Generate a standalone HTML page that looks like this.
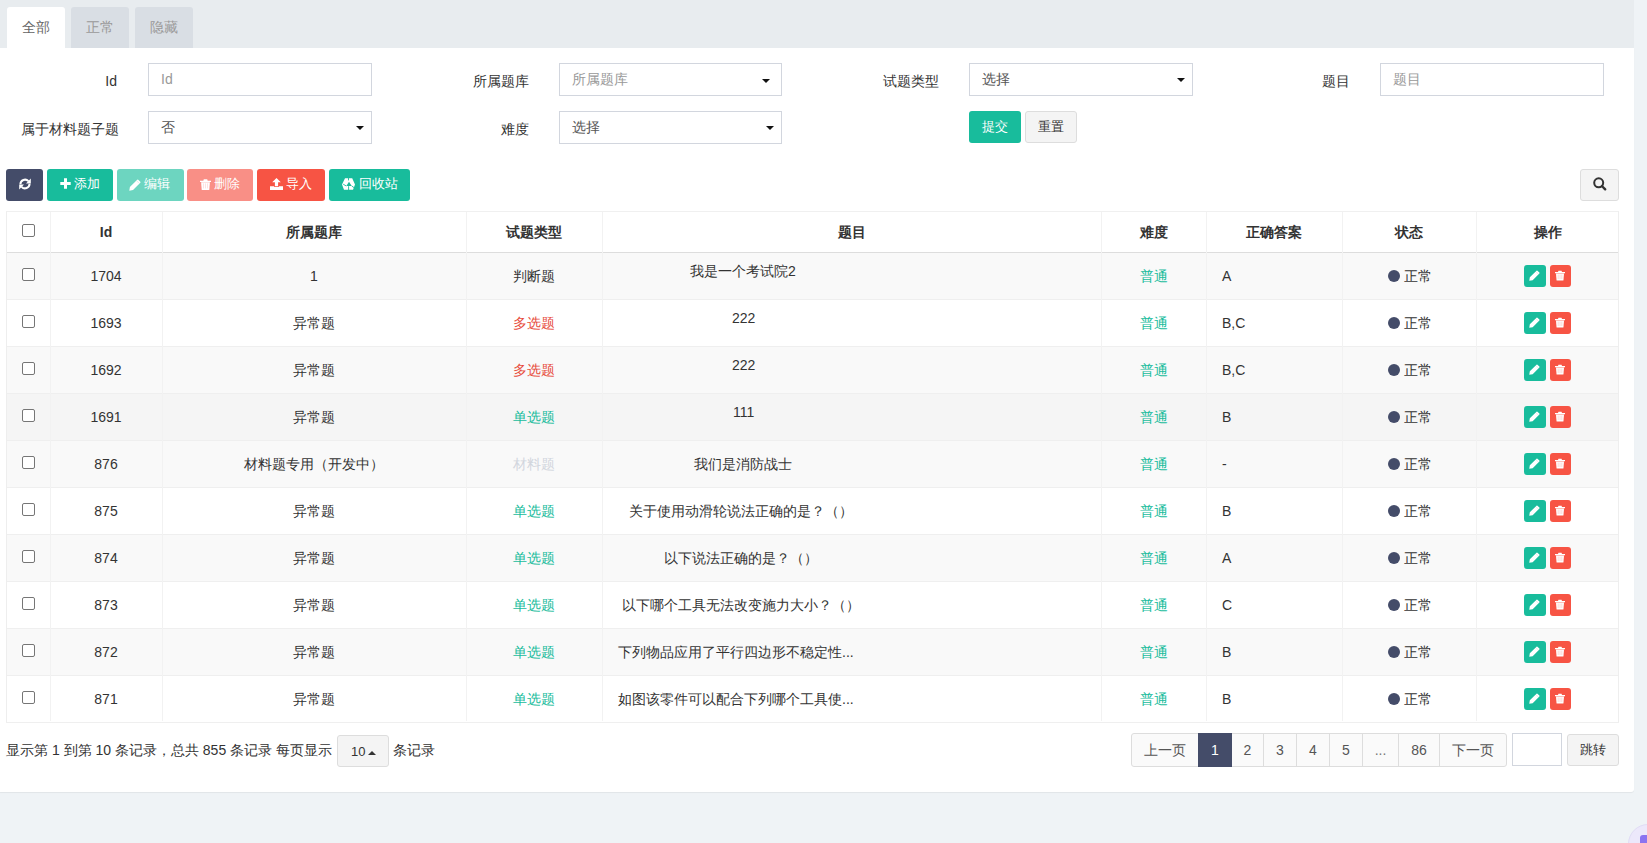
<!DOCTYPE html>
<html><head><meta charset="utf-8"><style>
*{box-sizing:border-box;margin:0;padding:0}
html,body{width:1647px;height:843px;overflow:hidden;background:#eff3f6;font-family:"Liberation Sans",sans-serif;font-size:14px;color:#333}
.a{position:absolute}
svg{display:block}
#topbar{left:0;top:0;width:1634px;height:48px;background:#e8ecef}
.tab{top:7px;height:41px;width:58px;border-radius:3px 3px 0 0;background:#d9dee4;color:#999;text-align:center;line-height:40px}
.tab.on{background:#fff;color:#666}
#panel{left:0;top:48px;width:1634px;height:744px;background:#fff;border-radius:0 0 3px 0;box-shadow:0 1px 1px rgba(0,0,0,0.06)}
.lbl{height:20px;line-height:20px;text-align:right;white-space:nowrap;color:#333}
.inp{height:33px;border:1px solid #d2d6de;background:#fff;color:#999;padding-left:12px;line-height:31px;white-space:nowrap}
.inp.sel{color:#555}
.caret{position:absolute;right:7px;top:14px;width:0;height:0;border-left:4px solid transparent;border-right:4px solid transparent;border-top:4px solid #111}
.btn{border-radius:3px;color:#fff;white-space:nowrap;height:32px}
.btn svg{position:absolute}
.btn span{position:absolute;top:-1px;line-height:32px;font-size:13px}
.tw{left:6px;top:211px;width:1613px;height:511px;border:1px solid #eee;border-top-color:#f0f0f0}
.th{top:212px;height:40px;line-height:40px;text-align:center;font-weight:bold;color:#333}
.vl{width:1px;background:#f2f2f2}
.hl{height:1px;background:#efefef}
.td{height:47px;line-height:47px;text-align:center;white-space:nowrap}
.cb{width:13px;height:13px;border:1px solid #767676;border-radius:2px;background:#fff}
.ob{width:22px;height:22px;border-radius:3px}
.ob svg{position:absolute}
.dot{width:12px;height:12px;border-radius:50%;background:#444c69}
.pg{top:733px;height:34px;border:1px solid #ddd;background:#fafafa;color:#555;text-align:center;line-height:32px}
</style></head><body>
<div id="topbar" class="a"></div>
<div class="a tab on" style="left:7px">全部</div>
<div class="a tab" style="left:71px">正常</div>
<div class="a tab" style="left:135px">隐藏</div>
<div id="panel" class="a"></div>
<div class="a lbl" style="right:1530px;top:71px">Id</div>
<div class="a inp" style="left:148px;top:63px;width:224px">Id</div>
<div class="a lbl" style="right:1118px;top:71px">所属题库</div>
<div class="a inp" style="left:559px;top:63px;width:223px">所属题库<i class="caret" style="right:11px;top:15px"></i></div>
<div class="a lbl" style="right:708px;top:71px">试题类型</div>
<div class="a inp sel" style="left:969px;top:63px;width:224px">选择<i class="caret"></i></div>
<div class="a lbl" style="right:297px;top:71px">题目</div>
<div class="a inp" style="left:1380px;top:63px;width:224px">题目</div>
<div class="a lbl" style="right:1528px;top:119px">属于材料题子题</div>
<div class="a inp sel" style="left:148px;top:111px;width:224px">否<i class="caret"></i></div>
<div class="a lbl" style="right:1118px;top:119px">难度</div>
<div class="a inp sel" style="left:559px;top:111px;width:223px">选择<i class="caret"></i></div>
<div class="a btn" style="left:969px;top:111px;width:52px;background:#18bc9c;text-align:center;line-height:31px;font-size:13px">提交</div>
<div class="a btn" style="left:1025px;top:111px;width:52px;background:#f4f4f4;border:1px solid #ddd;color:#333;text-align:center;line-height:29px;font-size:13px">重置</div>
<div class="a btn" style="left:6px;top:169px;width:37px;background:#444c69"><div class="a" style="left:13px;top:9px"><svg width="12" height="12" viewBox="0 0 12 12"><path d="M1.4 6.2A4.6 4.6 0 0 1 9.4 3.2" fill="none" stroke="#fff" stroke-width="2"/><path d="M11.8 0.6V5.4H7Z" fill="#fff"/><path d="M10.6 5.8A4.6 4.6 0 0 1 2.6 8.8" fill="none" stroke="#fff" stroke-width="2"/><path d="M0.2 11.4V6.6H5Z" fill="#fff"/></svg></div></div>
<div class="a btn" style="left:47px;top:169px;width:66px;background:#18bc9c"><div class="a" style="left:13px;top:9px"><svg width="11" height="11" viewBox="0 0 11 11"><path d="M4 0.3h3v3.7h3.7v3H7v3.7H4V7H0.3V4H4Z" fill="#fff"/></svg></div><span style="left:27px">添加</span></div>
<div class="a btn" style="left:117px;top:169px;width:67px;background:#6dd5c0"><div class="a" style="left:12px;top:10px"><svg width="12" height="12" viewBox="0 0 12 12"><path d="M0.3 11.7L0.9 8.0L8.2 0.7Q8.7 0.2 9.2 0.7L11.3 2.8Q11.8 3.3 11.3 3.8L4.0 11.1Z" fill="#fff"/><path d="M7.6 1.8L10.2 4.4" stroke="rgba(0,0,0,0.12)" stroke-width="0.8"/></svg></div><span style="left:27px">编辑</span></div>
<div class="a btn" style="left:187px;top:169px;width:66px;background:#f98f86"><div class="a" style="left:13px;top:10px"><svg width="11" height="11" viewBox="0 0 11 11"><path d="M3.8 0.3h3.4l0.5 1.4H11V3H0V1.7h3.3Z" fill="#fff"/><path d="M1.1 3.3h8.8l-0.6 7.4Q9.2 11 8.8 11H2.2Q1.8 11 1.7 10.7Z" fill="#fff"/><path d="M3.5 4.4v5M5.5 4.4v5M7.5 4.4v5" stroke="#f98f86" stroke-width="0.8" opacity="0.3"/></svg></div><span style="left:27px">删除</span></div>
<div class="a btn" style="left:257px;top:169px;width:68px;background:#f75444"><div class="a" style="left:13px;top:9px"><svg width="13" height="12" viewBox="0 0 13 12"><path d="M6.5 0L10.8 4.3H8.1V8.2H4.9V4.3H2.2Z" fill="#fff"/><path d="M0 8.2h4.2v0.9h4.6V8.2H13V12H0Z" fill="#fff"/></svg></div><span style="left:29px">导入</span></div>
<div class="a btn" style="left:329px;top:169px;width:81px;background:#18bc9c"><div class="a" style="left:13px;top:9px"><svg width="13" height="12" viewBox="0 0 13 12"><path fill-rule="evenodd" d="M3 0.3H10.2L13 6.5L11 11.7H2L0 6.5ZM4.3 8H9.7L7 3.8Z" fill="#fff"/><path d="M6.5 0V2.4M4.3 8L1.2 6.2M9.7 8L12 9.6M6.6 8.2V12" stroke="#18bc9c" stroke-width="0.9"/></svg></div><span style="left:30px">回收站</span></div>
<div class="a btn" style="left:1580px;top:169px;width:39px;background:#f4f4f4;border:1px solid #ddd"><div class="a" style="left:12px;top:7px"><svg width="14" height="14" viewBox="0 0 14 14"><circle cx="5.7" cy="5.8" r="4.5" fill="none" stroke="#333" stroke-width="2"/><path d="M8.9 9L12.2 12.3" stroke="#333" stroke-width="2.4" stroke-linecap="round"/></svg></div></div>
<div class="a tw"></div>
<div class="a" style="left:7px;top:252px;width:1611px;height:47px;background:#f9f9f9"></div>
<div class="a" style="left:7px;top:299px;width:1611px;height:47px;background:#fff"></div>
<div class="a hl" style="left:7px;top:299px;width:1611px"></div>
<div class="a" style="left:7px;top:346px;width:1611px;height:47px;background:#f9f9f9"></div>
<div class="a hl" style="left:7px;top:346px;width:1611px"></div>
<div class="a" style="left:7px;top:393px;width:1611px;height:47px;background:#f5f5f5"></div>
<div class="a hl" style="left:7px;top:393px;width:1611px"></div>
<div class="a" style="left:7px;top:440px;width:1611px;height:47px;background:#f9f9f9"></div>
<div class="a hl" style="left:7px;top:440px;width:1611px"></div>
<div class="a" style="left:7px;top:487px;width:1611px;height:47px;background:#fff"></div>
<div class="a hl" style="left:7px;top:487px;width:1611px"></div>
<div class="a" style="left:7px;top:534px;width:1611px;height:47px;background:#f9f9f9"></div>
<div class="a hl" style="left:7px;top:534px;width:1611px"></div>
<div class="a" style="left:7px;top:581px;width:1611px;height:47px;background:#fff"></div>
<div class="a hl" style="left:7px;top:581px;width:1611px"></div>
<div class="a" style="left:7px;top:628px;width:1611px;height:47px;background:#f9f9f9"></div>
<div class="a hl" style="left:7px;top:628px;width:1611px"></div>
<div class="a" style="left:7px;top:675px;width:1611px;height:47px;background:#fff"></div>
<div class="a hl" style="left:7px;top:675px;width:1611px"></div>
<div class="a" style="left:7px;top:252px;width:1611px;height:1px;background:#ddd"></div>
<div class="a hl" style="left:6px;top:722px;width:1613px"></div>
<div class="a vl" style="left:50px;top:212px;height:509px"></div>
<div class="a vl" style="left:162px;top:212px;height:509px"></div>
<div class="a vl" style="left:466px;top:212px;height:509px"></div>
<div class="a vl" style="left:602px;top:212px;height:509px"></div>
<div class="a vl" style="left:1101px;top:212px;height:509px"></div>
<div class="a vl" style="left:1206px;top:212px;height:509px"></div>
<div class="a vl" style="left:1342px;top:212px;height:509px"></div>
<div class="a vl" style="left:1476px;top:212px;height:509px"></div>
<div class="a cb" style="left:22px;top:224px"></div>
<div class="a th" style="left:50px;width:112px">Id</div>
<div class="a th" style="left:162px;width:304px">所属题库</div>
<div class="a th" style="left:466px;width:136px">试题类型</div>
<div class="a th" style="left:602px;width:499px">题目</div>
<div class="a th" style="left:1101px;width:105px">难度</div>
<div class="a th" style="left:1206px;width:136px">正确答案</div>
<div class="a th" style="left:1342px;width:134px">状态</div>
<div class="a th" style="left:1476px;width:143px">操作</div>
<div class="a cb" style="left:22px;top:268px"></div>
<div class="a td" style="left:50px;top:253px;width:112px">1704</div>
<div class="a td" style="left:162px;top:253px;width:304px">1</div>
<div class="a td" style="left:466px;top:253px;width:136px;color:#333">判断题</div>
<div class="a td" style="left:690px;top:248px;text-align:left">我是一个考试院2</div>
<div class="a td" style="left:1101px;top:253px;width:105px;color:#18bc9c">普通</div>
<div class="a td" style="left:1222px;top:253px;text-align:left">A</div>
<div class="a dot" style="left:1388px;top:270px"></div>
<div class="a td" style="left:1404px;top:253px;text-align:left">正常</div>
<div class="a ob" style="left:1524px;top:265px;background:#18bc9c"><div class="a" style="left:5px;top:5px"><svg width="11" height="11" viewBox="0 0 12 12"><path d="M0.3 11.7L0.9 8.0L8.2 0.7Q8.7 0.2 9.2 0.7L11.3 2.8Q11.8 3.3 11.3 3.8L4.0 11.1Z" fill="#fff"/><path d="M7.6 1.8L10.2 4.4" stroke="rgba(0,0,0,0.12)" stroke-width="0.8"/></svg></div></div>
<div class="a ob" style="left:1550px;top:265px;width:21px;background:#f75444"><div class="a" style="left:5px;top:5px"><svg width="10" height="11" viewBox="0 0 11 11"><path d="M3.8 0.3h3.4l0.5 1.4H11V3H0V1.7h3.3Z" fill="#fff"/><path d="M1.1 3.3h8.8l-0.6 7.4Q9.2 11 8.8 11H2.2Q1.8 11 1.7 10.7Z" fill="#fff"/><path d="M3.5 4.4v5M5.5 4.4v5M7.5 4.4v5" stroke="#f75444" stroke-width="0.8" opacity="0.3"/></svg></div></div>
<div class="a cb" style="left:22px;top:315px"></div>
<div class="a td" style="left:50px;top:300px;width:112px">1693</div>
<div class="a td" style="left:162px;top:300px;width:304px">异常题</div>
<div class="a td" style="left:466px;top:300px;width:136px;color:#e74c3c">多选题</div>
<div class="a td" style="left:732px;top:295px;text-align:left">222</div>
<div class="a td" style="left:1101px;top:300px;width:105px;color:#18bc9c">普通</div>
<div class="a td" style="left:1222px;top:300px;text-align:left">B,C</div>
<div class="a dot" style="left:1388px;top:317px"></div>
<div class="a td" style="left:1404px;top:300px;text-align:left">正常</div>
<div class="a ob" style="left:1524px;top:312px;background:#18bc9c"><div class="a" style="left:5px;top:5px"><svg width="11" height="11" viewBox="0 0 12 12"><path d="M0.3 11.7L0.9 8.0L8.2 0.7Q8.7 0.2 9.2 0.7L11.3 2.8Q11.8 3.3 11.3 3.8L4.0 11.1Z" fill="#fff"/><path d="M7.6 1.8L10.2 4.4" stroke="rgba(0,0,0,0.12)" stroke-width="0.8"/></svg></div></div>
<div class="a ob" style="left:1550px;top:312px;width:21px;background:#f75444"><div class="a" style="left:5px;top:5px"><svg width="10" height="11" viewBox="0 0 11 11"><path d="M3.8 0.3h3.4l0.5 1.4H11V3H0V1.7h3.3Z" fill="#fff"/><path d="M1.1 3.3h8.8l-0.6 7.4Q9.2 11 8.8 11H2.2Q1.8 11 1.7 10.7Z" fill="#fff"/><path d="M3.5 4.4v5M5.5 4.4v5M7.5 4.4v5" stroke="#f75444" stroke-width="0.8" opacity="0.3"/></svg></div></div>
<div class="a cb" style="left:22px;top:362px"></div>
<div class="a td" style="left:50px;top:347px;width:112px">1692</div>
<div class="a td" style="left:162px;top:347px;width:304px">异常题</div>
<div class="a td" style="left:466px;top:347px;width:136px;color:#e74c3c">多选题</div>
<div class="a td" style="left:732px;top:342px;text-align:left">222</div>
<div class="a td" style="left:1101px;top:347px;width:105px;color:#18bc9c">普通</div>
<div class="a td" style="left:1222px;top:347px;text-align:left">B,C</div>
<div class="a dot" style="left:1388px;top:364px"></div>
<div class="a td" style="left:1404px;top:347px;text-align:left">正常</div>
<div class="a ob" style="left:1524px;top:359px;background:#18bc9c"><div class="a" style="left:5px;top:5px"><svg width="11" height="11" viewBox="0 0 12 12"><path d="M0.3 11.7L0.9 8.0L8.2 0.7Q8.7 0.2 9.2 0.7L11.3 2.8Q11.8 3.3 11.3 3.8L4.0 11.1Z" fill="#fff"/><path d="M7.6 1.8L10.2 4.4" stroke="rgba(0,0,0,0.12)" stroke-width="0.8"/></svg></div></div>
<div class="a ob" style="left:1550px;top:359px;width:21px;background:#f75444"><div class="a" style="left:5px;top:5px"><svg width="10" height="11" viewBox="0 0 11 11"><path d="M3.8 0.3h3.4l0.5 1.4H11V3H0V1.7h3.3Z" fill="#fff"/><path d="M1.1 3.3h8.8l-0.6 7.4Q9.2 11 8.8 11H2.2Q1.8 11 1.7 10.7Z" fill="#fff"/><path d="M3.5 4.4v5M5.5 4.4v5M7.5 4.4v5" stroke="#f75444" stroke-width="0.8" opacity="0.3"/></svg></div></div>
<div class="a cb" style="left:22px;top:409px"></div>
<div class="a td" style="left:50px;top:394px;width:112px">1691</div>
<div class="a td" style="left:162px;top:394px;width:304px">异常题</div>
<div class="a td" style="left:466px;top:394px;width:136px;color:#18bc9c">单选题</div>
<div class="a td" style="left:733px;top:389px;text-align:left">111</div>
<div class="a td" style="left:1101px;top:394px;width:105px;color:#18bc9c">普通</div>
<div class="a td" style="left:1222px;top:394px;text-align:left">B</div>
<div class="a dot" style="left:1388px;top:411px"></div>
<div class="a td" style="left:1404px;top:394px;text-align:left">正常</div>
<div class="a ob" style="left:1524px;top:406px;background:#18bc9c"><div class="a" style="left:5px;top:5px"><svg width="11" height="11" viewBox="0 0 12 12"><path d="M0.3 11.7L0.9 8.0L8.2 0.7Q8.7 0.2 9.2 0.7L11.3 2.8Q11.8 3.3 11.3 3.8L4.0 11.1Z" fill="#fff"/><path d="M7.6 1.8L10.2 4.4" stroke="rgba(0,0,0,0.12)" stroke-width="0.8"/></svg></div></div>
<div class="a ob" style="left:1550px;top:406px;width:21px;background:#f75444"><div class="a" style="left:5px;top:5px"><svg width="10" height="11" viewBox="0 0 11 11"><path d="M3.8 0.3h3.4l0.5 1.4H11V3H0V1.7h3.3Z" fill="#fff"/><path d="M1.1 3.3h8.8l-0.6 7.4Q9.2 11 8.8 11H2.2Q1.8 11 1.7 10.7Z" fill="#fff"/><path d="M3.5 4.4v5M5.5 4.4v5M7.5 4.4v5" stroke="#f75444" stroke-width="0.8" opacity="0.3"/></svg></div></div>
<div class="a cb" style="left:22px;top:456px"></div>
<div class="a td" style="left:50px;top:441px;width:112px">876</div>
<div class="a td" style="left:162px;top:441px;width:304px">材料题专用（开发中）</div>
<div class="a td" style="left:466px;top:441px;width:136px;color:#d2d6de">材料题</div>
<div class="a td" style="left:694px;top:441px;text-align:left">我们是消防战士</div>
<div class="a td" style="left:1101px;top:441px;width:105px;color:#18bc9c">普通</div>
<div class="a td" style="left:1222px;top:441px;text-align:left">-</div>
<div class="a dot" style="left:1388px;top:458px"></div>
<div class="a td" style="left:1404px;top:441px;text-align:left">正常</div>
<div class="a ob" style="left:1524px;top:453px;background:#18bc9c"><div class="a" style="left:5px;top:5px"><svg width="11" height="11" viewBox="0 0 12 12"><path d="M0.3 11.7L0.9 8.0L8.2 0.7Q8.7 0.2 9.2 0.7L11.3 2.8Q11.8 3.3 11.3 3.8L4.0 11.1Z" fill="#fff"/><path d="M7.6 1.8L10.2 4.4" stroke="rgba(0,0,0,0.12)" stroke-width="0.8"/></svg></div></div>
<div class="a ob" style="left:1550px;top:453px;width:21px;background:#f75444"><div class="a" style="left:5px;top:5px"><svg width="10" height="11" viewBox="0 0 11 11"><path d="M3.8 0.3h3.4l0.5 1.4H11V3H0V1.7h3.3Z" fill="#fff"/><path d="M1.1 3.3h8.8l-0.6 7.4Q9.2 11 8.8 11H2.2Q1.8 11 1.7 10.7Z" fill="#fff"/><path d="M3.5 4.4v5M5.5 4.4v5M7.5 4.4v5" stroke="#f75444" stroke-width="0.8" opacity="0.3"/></svg></div></div>
<div class="a cb" style="left:22px;top:503px"></div>
<div class="a td" style="left:50px;top:488px;width:112px">875</div>
<div class="a td" style="left:162px;top:488px;width:304px">异常题</div>
<div class="a td" style="left:466px;top:488px;width:136px;color:#18bc9c">单选题</div>
<div class="a td" style="left:629px;top:488px;text-align:left">关于使用动滑轮说法正确的是？（）</div>
<div class="a td" style="left:1101px;top:488px;width:105px;color:#18bc9c">普通</div>
<div class="a td" style="left:1222px;top:488px;text-align:left">B</div>
<div class="a dot" style="left:1388px;top:505px"></div>
<div class="a td" style="left:1404px;top:488px;text-align:left">正常</div>
<div class="a ob" style="left:1524px;top:500px;background:#18bc9c"><div class="a" style="left:5px;top:5px"><svg width="11" height="11" viewBox="0 0 12 12"><path d="M0.3 11.7L0.9 8.0L8.2 0.7Q8.7 0.2 9.2 0.7L11.3 2.8Q11.8 3.3 11.3 3.8L4.0 11.1Z" fill="#fff"/><path d="M7.6 1.8L10.2 4.4" stroke="rgba(0,0,0,0.12)" stroke-width="0.8"/></svg></div></div>
<div class="a ob" style="left:1550px;top:500px;width:21px;background:#f75444"><div class="a" style="left:5px;top:5px"><svg width="10" height="11" viewBox="0 0 11 11"><path d="M3.8 0.3h3.4l0.5 1.4H11V3H0V1.7h3.3Z" fill="#fff"/><path d="M1.1 3.3h8.8l-0.6 7.4Q9.2 11 8.8 11H2.2Q1.8 11 1.7 10.7Z" fill="#fff"/><path d="M3.5 4.4v5M5.5 4.4v5M7.5 4.4v5" stroke="#f75444" stroke-width="0.8" opacity="0.3"/></svg></div></div>
<div class="a cb" style="left:22px;top:550px"></div>
<div class="a td" style="left:50px;top:535px;width:112px">874</div>
<div class="a td" style="left:162px;top:535px;width:304px">异常题</div>
<div class="a td" style="left:466px;top:535px;width:136px;color:#18bc9c">单选题</div>
<div class="a td" style="left:664px;top:535px;text-align:left">以下说法正确的是？（）</div>
<div class="a td" style="left:1101px;top:535px;width:105px;color:#18bc9c">普通</div>
<div class="a td" style="left:1222px;top:535px;text-align:left">A</div>
<div class="a dot" style="left:1388px;top:552px"></div>
<div class="a td" style="left:1404px;top:535px;text-align:left">正常</div>
<div class="a ob" style="left:1524px;top:547px;background:#18bc9c"><div class="a" style="left:5px;top:5px"><svg width="11" height="11" viewBox="0 0 12 12"><path d="M0.3 11.7L0.9 8.0L8.2 0.7Q8.7 0.2 9.2 0.7L11.3 2.8Q11.8 3.3 11.3 3.8L4.0 11.1Z" fill="#fff"/><path d="M7.6 1.8L10.2 4.4" stroke="rgba(0,0,0,0.12)" stroke-width="0.8"/></svg></div></div>
<div class="a ob" style="left:1550px;top:547px;width:21px;background:#f75444"><div class="a" style="left:5px;top:5px"><svg width="10" height="11" viewBox="0 0 11 11"><path d="M3.8 0.3h3.4l0.5 1.4H11V3H0V1.7h3.3Z" fill="#fff"/><path d="M1.1 3.3h8.8l-0.6 7.4Q9.2 11 8.8 11H2.2Q1.8 11 1.7 10.7Z" fill="#fff"/><path d="M3.5 4.4v5M5.5 4.4v5M7.5 4.4v5" stroke="#f75444" stroke-width="0.8" opacity="0.3"/></svg></div></div>
<div class="a cb" style="left:22px;top:597px"></div>
<div class="a td" style="left:50px;top:582px;width:112px">873</div>
<div class="a td" style="left:162px;top:582px;width:304px">异常题</div>
<div class="a td" style="left:466px;top:582px;width:136px;color:#18bc9c">单选题</div>
<div class="a td" style="left:622px;top:582px;text-align:left">以下哪个工具无法改变施力大小？（）</div>
<div class="a td" style="left:1101px;top:582px;width:105px;color:#18bc9c">普通</div>
<div class="a td" style="left:1222px;top:582px;text-align:left">C</div>
<div class="a dot" style="left:1388px;top:599px"></div>
<div class="a td" style="left:1404px;top:582px;text-align:left">正常</div>
<div class="a ob" style="left:1524px;top:594px;background:#18bc9c"><div class="a" style="left:5px;top:5px"><svg width="11" height="11" viewBox="0 0 12 12"><path d="M0.3 11.7L0.9 8.0L8.2 0.7Q8.7 0.2 9.2 0.7L11.3 2.8Q11.8 3.3 11.3 3.8L4.0 11.1Z" fill="#fff"/><path d="M7.6 1.8L10.2 4.4" stroke="rgba(0,0,0,0.12)" stroke-width="0.8"/></svg></div></div>
<div class="a ob" style="left:1550px;top:594px;width:21px;background:#f75444"><div class="a" style="left:5px;top:5px"><svg width="10" height="11" viewBox="0 0 11 11"><path d="M3.8 0.3h3.4l0.5 1.4H11V3H0V1.7h3.3Z" fill="#fff"/><path d="M1.1 3.3h8.8l-0.6 7.4Q9.2 11 8.8 11H2.2Q1.8 11 1.7 10.7Z" fill="#fff"/><path d="M3.5 4.4v5M5.5 4.4v5M7.5 4.4v5" stroke="#f75444" stroke-width="0.8" opacity="0.3"/></svg></div></div>
<div class="a cb" style="left:22px;top:644px"></div>
<div class="a td" style="left:50px;top:629px;width:112px">872</div>
<div class="a td" style="left:162px;top:629px;width:304px">异常题</div>
<div class="a td" style="left:466px;top:629px;width:136px;color:#18bc9c">单选题</div>
<div class="a td" style="left:618px;top:629px;text-align:left">下列物品应用了平行四边形不稳定性...</div>
<div class="a td" style="left:1101px;top:629px;width:105px;color:#18bc9c">普通</div>
<div class="a td" style="left:1222px;top:629px;text-align:left">B</div>
<div class="a dot" style="left:1388px;top:646px"></div>
<div class="a td" style="left:1404px;top:629px;text-align:left">正常</div>
<div class="a ob" style="left:1524px;top:641px;background:#18bc9c"><div class="a" style="left:5px;top:5px"><svg width="11" height="11" viewBox="0 0 12 12"><path d="M0.3 11.7L0.9 8.0L8.2 0.7Q8.7 0.2 9.2 0.7L11.3 2.8Q11.8 3.3 11.3 3.8L4.0 11.1Z" fill="#fff"/><path d="M7.6 1.8L10.2 4.4" stroke="rgba(0,0,0,0.12)" stroke-width="0.8"/></svg></div></div>
<div class="a ob" style="left:1550px;top:641px;width:21px;background:#f75444"><div class="a" style="left:5px;top:5px"><svg width="10" height="11" viewBox="0 0 11 11"><path d="M3.8 0.3h3.4l0.5 1.4H11V3H0V1.7h3.3Z" fill="#fff"/><path d="M1.1 3.3h8.8l-0.6 7.4Q9.2 11 8.8 11H2.2Q1.8 11 1.7 10.7Z" fill="#fff"/><path d="M3.5 4.4v5M5.5 4.4v5M7.5 4.4v5" stroke="#f75444" stroke-width="0.8" opacity="0.3"/></svg></div></div>
<div class="a cb" style="left:22px;top:691px"></div>
<div class="a td" style="left:50px;top:676px;width:112px">871</div>
<div class="a td" style="left:162px;top:676px;width:304px">异常题</div>
<div class="a td" style="left:466px;top:676px;width:136px;color:#18bc9c">单选题</div>
<div class="a td" style="left:618px;top:676px;text-align:left">如图该零件可以配合下列哪个工具使...</div>
<div class="a td" style="left:1101px;top:676px;width:105px;color:#18bc9c">普通</div>
<div class="a td" style="left:1222px;top:676px;text-align:left">B</div>
<div class="a dot" style="left:1388px;top:693px"></div>
<div class="a td" style="left:1404px;top:676px;text-align:left">正常</div>
<div class="a ob" style="left:1524px;top:688px;background:#18bc9c"><div class="a" style="left:5px;top:5px"><svg width="11" height="11" viewBox="0 0 12 12"><path d="M0.3 11.7L0.9 8.0L8.2 0.7Q8.7 0.2 9.2 0.7L11.3 2.8Q11.8 3.3 11.3 3.8L4.0 11.1Z" fill="#fff"/><path d="M7.6 1.8L10.2 4.4" stroke="rgba(0,0,0,0.12)" stroke-width="0.8"/></svg></div></div>
<div class="a ob" style="left:1550px;top:688px;width:21px;background:#f75444"><div class="a" style="left:5px;top:5px"><svg width="10" height="11" viewBox="0 0 11 11"><path d="M3.8 0.3h3.4l0.5 1.4H11V3H0V1.7h3.3Z" fill="#fff"/><path d="M1.1 3.3h8.8l-0.6 7.4Q9.2 11 8.8 11H2.2Q1.8 11 1.7 10.7Z" fill="#fff"/><path d="M3.5 4.4v5M5.5 4.4v5M7.5 4.4v5" stroke="#f75444" stroke-width="0.8" opacity="0.3"/></svg></div></div>
<div class="a" style="left:6px;top:740px;line-height:20px;white-space:nowrap">显示第 1 到第 10 条记录，总共 855 条记录 每页显示</div>
<div class="a" style="left:337px;top:735px;width:52px;height:32px;border:1px solid #ddd;border-radius:3px;background:#f4f4f4"><span class="a" style="left:13px;top:6px;line-height:20px;font-size:13px">10</span><i class="a" style="left:30px;top:15px;width:0;height:0;border-left:4px solid transparent;border-right:4px solid transparent;border-bottom:4px solid #333"></i></div>
<div class="a" style="left:393px;top:740px;line-height:20px;white-space:nowrap">条记录</div>
<div class="a pg" style="left:1131px;width:68px;border-radius:3px 0 0 3px;">上一页</div>
<div class="a pg" style="left:1231px;width:33px;">2</div>
<div class="a pg" style="left:1263px;width:34px;">3</div>
<div class="a pg" style="left:1296px;width:34px;">4</div>
<div class="a pg" style="left:1329px;width:34px;">5</div>
<div class="a pg" style="left:1362px;width:37px;color:#777;">...</div>
<div class="a pg" style="left:1398px;width:42px;">86</div>
<div class="a pg" style="left:1439px;width:68px;border-radius:0 3px 3px 0;">下一页</div>
<div class="a pg" style="left:1198px;width:34px;background:#444c69;border-color:#444c69;color:#fff;">1</div>
<div class="a" style="left:1512px;top:733px;width:50px;height:33px;border:1px solid #d2d6de;background:#fff"></div>
<div class="a btn" style="left:1567px;top:734px;width:52px;background:#f4f4f4;border:1px solid #ddd;color:#333;text-align:center;line-height:29px;height:32px;font-size:13px">跳转</div>
<div class="a" style="left:1628px;top:824px;width:40px;height:40px;border-radius:50%;background:#ece8fb;border:1px solid #e0dcf5"></div>
<div class="a" style="left:1640px;top:835px;width:14px;height:14px;border-radius:3px;background:#8b73f0"></div>
</body></html>
